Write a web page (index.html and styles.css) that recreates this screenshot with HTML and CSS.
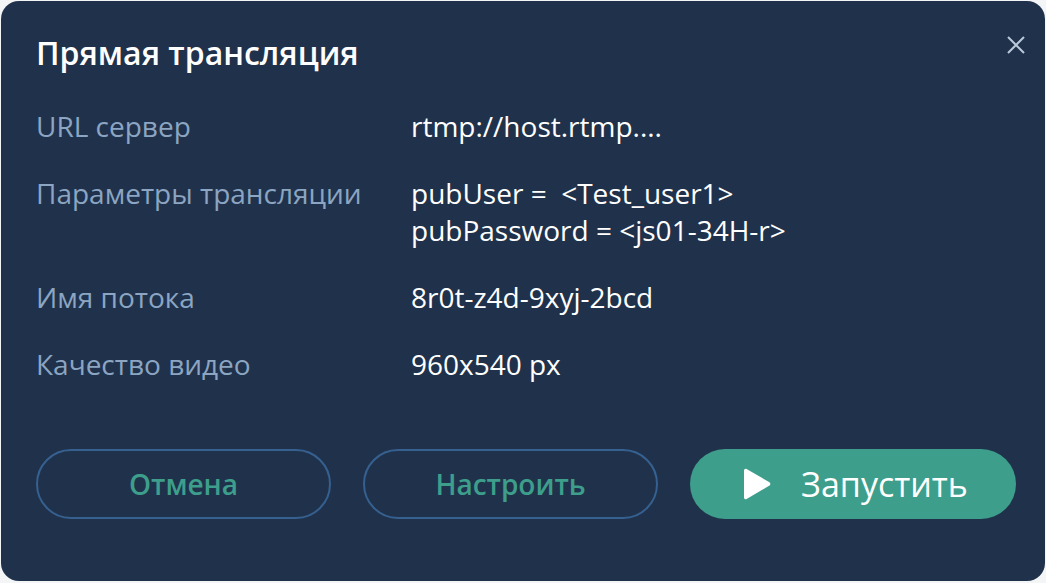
FILE: index.html
```html
<!DOCTYPE html>
<html lang="ru">
<head>
    <meta charset="UTF-8">
    <meta name="viewport" content="width=device-width, initial-scale=1.0">
    <title>Прямая трансляция</title>
    <link rel="stylesheet" href="styles.css">
</head>
<body>
    <div class="modal">
        <div class="modal-header">
            <h1 class="modal-title">Прямая трансляция</h1>
            <button class="close-btn" aria-label="Закрыть">
                <svg width="20" height="20" viewBox="0 0 20 20">
                    <path d="M2 2L18 18M18 2L2 18" stroke="#b9c9da" stroke-width="2" fill="none"/>
                </svg>
            </button>
        </div>
        <div class="params">
            <div class="param-row">
                <div class="param-label">URL сервер</div>
                <div class="param-value">rtmp://host.rtmp....</div>
            </div>
            <div class="param-row">
                <div class="param-label">Параметры трансляции</div>
                <div class="param-value">pubUser = &nbsp;&lt;Test_user1&gt;<br>pubPassword = &lt;js01-34H-r&gt;</div>
            </div>
            <div class="param-row">
                <div class="param-label">Имя потока</div>
                <div class="param-value">8r0t-z4d-9xyj-2bcd</div>
            </div>
            <div class="param-row">
                <div class="param-label">Качество видео</div>
                <div class="param-value">960x540 px</div>
            </div>
        </div>
        <div class="actions">
            <button class="btn btn-outline">Отмена</button>
            <button class="btn btn-outline">Настроить</button>
            <button class="btn btn-primary">
                <svg class="play-icon" width="30" height="34" viewBox="0 0 30 34">
                    <path d="M2 3.5C2 2 3.4 1.2 4.6 1.9L27.5 15.3C28.6 16 28.6 17.9 27.5 18.6L4.6 32.1C3.4 32.8 2 32 2 30.5Z" fill="#ffffff"/>
                </svg>
                <span>Запустить</span>
            </button>
        </div>
    </div>
</body>
</html>
```

FILE: styles.css
```css
body {
    margin: 0;
    padding: 1px;
    background-color: #f4f5f7;
    font-family: 'Open Sans', 'Noto Sans', sans-serif;
}

.modal {
    background-color: #20324b;
    height: 580px;
    border-radius: 18px;
    padding: 0 29px 0 35px;
    box-sizing: border-box;
    display: flex;
    flex-direction: column;
}

.modal-header {
    display: flex;
    justify-content: space-between;
    align-items: flex-start;
    padding-top: 34px;
}

.modal-title {
    margin: 0;
    color: #ffffff;
    font-size: 32px;
    font-weight: 600;
    line-height: 36px;
}

.close-btn {
    background: none;
    border: none;
    padding: 0;
    margin-top: 0;
    margin-right: -10px;
    cursor: pointer;
    display: flex;
}

.params {
    display: flex;
    flex-direction: column;
    gap: 30px;
    margin-top: 37px;
}

.param-row {
    display: flex;
    font-size: 28px;
    line-height: 37px;
}

.param-label {
    width: 375px;
    color: #8ba5c2;
}

.param-value {
    color: #ffffff;
}

.actions {
    display: flex;
    gap: 32px;
    margin-top: auto;
    margin-bottom: 62px;
}

.btn {
    height: 70px;
    border-radius: 35px;
    font-family: inherit;
    font-size: 28px;
    font-weight: 600;
    cursor: pointer;
    display: flex;
    align-items: center;
    justify-content: center;
}

.btn-outline {
    width: 295px;
    background: transparent;
    border: 2px solid #35608f;
    color: #3d9e8b;
}

.btn-primary {
    width: 326px;
    background-color: #3d9e8b;
    border: none;
    color: #ffffff;
    font-weight: 400;
    font-size: 34px;
    gap: 29px;
    padding-left: 10px;
}

.play-icon {
    display: block;
}
```
